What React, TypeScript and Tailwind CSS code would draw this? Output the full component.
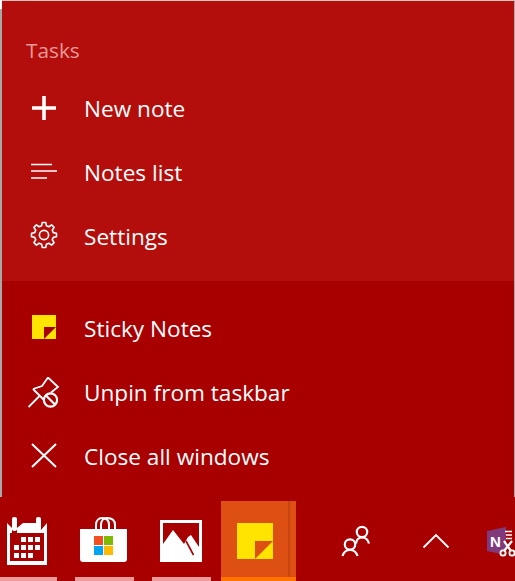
import type { ReactNode } from 'react';

// Rows are 64px tall, icons sit in a 32px box. viewBox values are page coordinates
// so the shapes can be read straight off the reference.

function gearPath(cx: number, cy: number) {
  const pts: string[] = [];
  const teeth = 8;
  for (let i = 0; i < teeth; i++) {
    const a = (i / teeth) * Math.PI * 2 - Math.PI / 2;
    const step = (Math.PI * 2) / teeth;
    const corners: [number, number][] = [
      [9.6, a - step * 0.32],
      [12.6, a - step * 0.18],
      [12.6, a + step * 0.18],
      [9.6, a + step * 0.32],
    ];
    for (const [r, t] of corners) {
      pts.push(`${(cx + r * Math.cos(t)).toFixed(2)} ${(cy + r * Math.sin(t)).toFixed(2)}`);
    }
  }
  return `M${pts.join('L')}Z`;
}

function Row({ y, label, children }: { y: number; label: string; children: ReactNode }) {
  return (
    <div className="h-16 flex items-center pl-[26px]">
      <svg className="w-8 h-8 shrink-0" viewBox={`28 ${y - 16} 32 32`}>
        {children}
      </svg>
      <span className="ml-6 text-[22.6px] leading-[24px] text-white">{label}</span>
    </div>
  );
}

function Note({ x, y, size, fold }: { x: number; y: number; size: number; fold: string }) {
  const h = size / 2;
  return (
    <>
      <rect x={x} y={y} width={size} height={size} fill="#ffe400" />
      <path d={`M${x + h} ${y + h}H${x + size}L${x + h} ${y + size}Z`} fill={fold} />
    </>
  );
}

function Tile({ width, children }: { width: string; children: ReactNode }) {
  return (
    <div className={`${width} shrink-0 flex flex-col`}>
      <div className="h-[76px]">{children}</div>
      <div className="h-1 bg-[#ec9a9a]" />
    </div>
  );
}

export default function App() {
  return (
    <div
      className="relative w-[515px] h-[581px] overflow-hidden bg-[#a80000]"
      style={{ fontFamily: '"Open Sans", "Noto Sans", sans-serif' }}
    >
      <div className="border-t border-[#d9c4c4] border-l-2 border-l-[#a9a9a9] border-r border-r-[#a9a9a9]">
        <section className="bg-[#b30e0c]">
          <div className="h-[76px] pl-6 pt-[35px] text-[20.8px] leading-[28px] text-[#e79a99]">Tasks</div>
          <Row y={109} label="New note">
            <path d="M32 108H56M44 96V120" stroke="#fff" strokeWidth="3.6" fill="none" />
          </Row>
          <Row y={173} label="Notes list">
            <path d="M31 164.5H52M31 171H57M31 178H47" stroke="#fff" strokeWidth="1.6" fill="none" />
          </Row>
          <Row y={237} label="Settings">
            <path d={gearPath(44, 235)} stroke="#fff" strokeWidth="1.6" fill="none" strokeLinejoin="round" />
            <circle cx="44" cy="235" r="4.6" stroke="#fff" strokeWidth="1.6" fill="none" />
          </Row>
          <div className="h-3" />
        </section>
        <section className="pt-4 pb-2 bg-[#a80000]">
          <Row y={329} label="Sticky Notes">
            <Note x={32} y={315} size={24} fold="#a80000" />
          </Row>
          <Row y={393} label="Unpin from taskbar">
            <path
              d="M28.5 407L39 396.5M33 389L42 386L48 377.5L58 387L51 392.5M33 389L45 401"
              stroke="#fff"
              strokeWidth="1.8"
              fill="none"
            />
            <circle cx="50.5" cy="400" r="6.6" stroke="#fff" strokeWidth="2.2" fill="#a80000" />
            <path d="M46 395.5L55 404.5" stroke="#fff" strokeWidth="2.2" fill="none" />
          </Row>
          <Row y={457} label="Close all windows">
            <path d="M32 444L56 467M56 444L32 467" stroke="#fff" strokeWidth="2" fill="none" />
          </Row>
        </section>
      </div>

      <div className="pt-1 flex h-[84px]">
        <Tile width="w-[57px]">
          <svg className="w-[57px] h-[76px]" viewBox="0 501 57 76">
            <path
              fillRule="evenodd"
              fill="#fff"
              d="M7 523L12 528V533H17V528L23 523H36V530L41 530L47 523V565H7ZM10 533V561H44V533Z"
            />
            <rect x="12" y="517" width="5" height="14" rx="2" fill="#fff" />
            <rect x="36" y="517" width="5" height="14" rx="2" fill="#fff" />
            <path
              fill="#fff"
              d="M21 537h5v5h-5zM28 537h5v5h-5zM35 537h5v5h-5zM14 545h5v5h-5zM21 545h5v5h-5zM28 545h5v5h-5zM35 545h5v5h-5zM14 553h5v5h-5zM21 553h5v5h-5zM28 553h5v5h-5z"
            />
          </svg>
        </Tile>
        <div className="ml-[18px]">
          <Tile width="w-[59px]">
            <svg className="w-[59px] h-[76px]" viewBox="75 501 59 76">
              <path d="M96 530V525C96 520 99 518 102 518C106 518 109 520 109 525V530" stroke="#fff" strokeWidth="2" fill="none" />
              <path d="M101 530V525C101 520 104 518 107 518C112 518 115 520 115 525V530" stroke="#fff" strokeWidth="2" fill="none" />
              <path d="M80 529H127V559Q127 562 124 562H83Q80 562 80 559Z" fill="#fff" />
              <rect x="94" y="536" width="9" height="9" fill="#f25022" />
              <rect x="104" y="536" width="9" height="9" fill="#7fba00" />
              <rect x="94" y="546" width="9" height="9" fill="#00a4ef" />
              <rect x="104" y="546" width="9" height="9" fill="#ffb900" />
            </svg>
          </Tile>
        </div>
        <div className="ml-[18px]">
          <Tile width="w-[59px]">
            <svg className="w-[59px] h-[76px]" viewBox="152 501 59 76">
              <rect x="160" y="520" width="42" height="42" fill="#fff" />
              <rect x="163" y="523" width="36" height="36" fill="#a80000" />
              <path d="M163 544L173 530L184 544L188 537L191 535L199 547V560H163Z" fill="#fff" />
              <path d="M186 541L193.5 555" stroke="#a80000" strokeWidth="1.6" fill="none" />
            </svg>
          </Tile>
        </div>
        <div className="ml-[10px] w-[75px] shrink-0 flex flex-col">
          <div className="h-[76px] flex bg-[#de4f13]">
            <svg className="w-[67px] h-[76px] shrink-0" viewBox="221 501 67 76">
              <Note x={237} y={523} size={36} fold="#de4f13" />
            </svg>
            <div className="w-[2px] bg-[#c4470f]" />
          </div>
          <div className="h-1 bg-[#ff7300]" />
        </div>
        <svg className="ml-[41px] w-10 h-[76px] shrink-0" viewBox="337 501 40 76">
          <g stroke="#fff" strokeWidth="2.2" fill="none">
            <circle cx="362" cy="532" r="5.2" />
            <path d="M356 543.5C356.5 539.5 358.5 537.5 362 537.5C365.5 537.5 368 539.5 369 543.5" />
            <circle cx="350" cy="544.5" r="5.2" />
            <path d="M342.5 556C343.5 552.5 346 550 350 550C354 550 356.5 552.5 357.5 556" />
          </g>
        </svg>
        <svg className="ml-[39px] w-10 h-[76px] shrink-0" viewBox="416 501 40 76">
          <path d="M423.5 547.5L436 535L448.5 547.5" stroke="#fff" strokeWidth="1.8" fill="none" />
        </svg>
        <svg className="ml-[31px] w-7 h-[76px] shrink-0" viewBox="487 501 28 76">
          <path d="M487 531L506 527V555L487 551Z" fill="#80397b" />
          <text x="490" y="547" fontSize="15" fontWeight="700" fill="#fff" fontFamily="Liberation Sans, sans-serif">
            N
          </text>
          <path d="M505 531.5H512M506 535H512M506 538.5H512" stroke="#fff" strokeWidth="1.6" fill="none" />
          <path d="M504 541L511 551M512 541L504 551" stroke="#fff" strokeWidth="2.2" />
          <circle cx="503" cy="553" r="2.6" stroke="#fff" strokeWidth="1.8" fill="#a80000" />
          <circle cx="512" cy="553" r="2.6" stroke="#fff" strokeWidth="1.8" fill="#a80000" />
        </svg>
      </div>
      <div className="absolute left-0 top-0 w-[2px] h-[9px] bg-white" />
    </div>
  );
}
